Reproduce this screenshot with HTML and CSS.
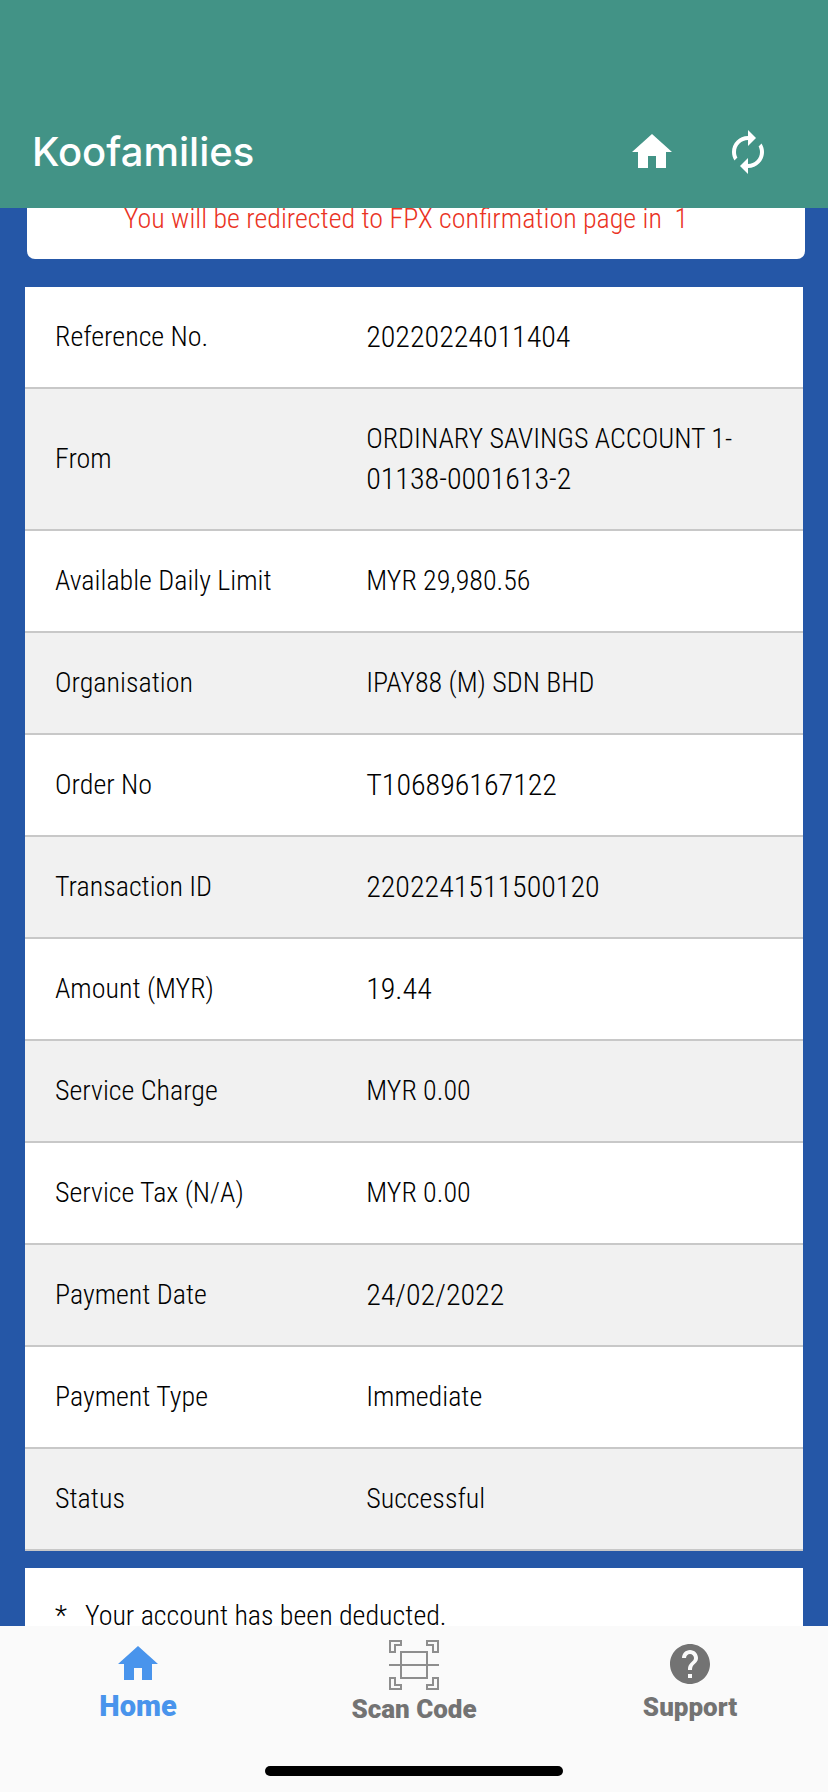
FILE: index.html
```html
<!DOCTYPE html>
<html lang="en">
<head>
<meta charset="utf-8">
<meta name="viewport" content="width=device-width, initial-scale=1">
<title>Koofamilies</title>
<link rel="stylesheet" href="styles.css">
</head>
<body>
<div class="app">
  <header class="app-bar">
    <h1 class="app-title">Koofamilies</h1>
    <div class="app-actions">
      <button class="icon-button" type="button" aria-label="Home">
        <svg class="icon" viewBox="0 0 24 24"><path d="M10 20v-6h4v6h5v-8h3L12 3 2 12h3v8z"/></svg>
      </button>
      <button class="icon-button" type="button" aria-label="Refresh">
        <svg class="icon" viewBox="0 0 24 24"><path d="M12 6v3l4-4-4-4v3c-4.42 0-8 3.58-8 8 0 1.57.46 3.03 1.24 4.26L6.7 14.8c-.45-.83-.7-1.79-.7-2.8 0-3.31 2.69-6 6-6zm6.76 1.74L17.3 9.2c.44.84.7 1.79.7 2.8 0 3.31-2.69 6-6 6v-3l-4 4 4 4v-3c4.42 0 8-3.58 8-8 0-1.57-.46-3.03-1.24-4.26z"/></svg>
      </button>
    </div>
  </header>

  <main class="page">
    <p class="redirect">You will be redirected to FPX confirmation page in &nbsp;1</p>
    <table class="details">
      <tbody>
        <tr><th scope="row">Reference No.</th><td class="number">20220224011404</td></tr>
        <tr><th scope="row">From</th><td>ORDINARY SAVINGS ACCOUNT 1-<div class="number">01138-0001613-2</div></td></tr>
        <tr><th scope="row">Available Daily Limit</th><td>MYR 29,980.56</td></tr>
        <tr><th scope="row">Organisation</th><td>IPAY88 (M) SDN BHD</td></tr>
        <tr><th scope="row">Order No</th><td class="number">T106896167122</td></tr>
        <tr><th scope="row">Transaction ID</th><td class="number">2202241511500120</td></tr>
        <tr><th scope="row">Amount (MYR)</th><td class="number">19.44</td></tr>
        <tr><th scope="row">Service Charge</th><td>MYR 0.00</td></tr>
        <tr><th scope="row">Service Tax (N/A)</th><td>MYR 0.00</td></tr>
        <tr><th scope="row">Payment Date</th><td class="number">24/02/2022</td></tr>
        <tr><th scope="row">Payment Type</th><td>Immediate</td></tr>
        <tr><th scope="row">Status</th><td>Successful</td></tr>
      </tbody>
    </table>
    <div class="notes"><span>*</span><span>Your account has been deducted.</span></div>
  </main>

  <footer class="bottom">
    <nav class="tabs">
      <button class="tab tab-active" type="button">
        <svg class="icon" viewBox="0 0 24 24"><path d="M10 20v-6h4v6h5v-8h3L12 3 2 12h3v8z"/></svg>
        <span>Home</span>
      </button>
      <button class="tab" type="button">
        <svg class="scan-icon" viewBox="0 0 50 50"><path d="M1 1h11v4H6v7H1zM49 1H38v4h6v7h5zM1 49h11v-4H6v-7H1zM49 49H38v-4h6v-7h5zM12 12h26v26H12zM0 25h50"/></svg>
        <span>Scan Code</span>
      </button>
      <button class="tab" type="button">
        <svg class="icon" viewBox="0 0 24 24"><path d="M12 2C6.48 2 2 6.48 2 12s4.480 10 10 10 10-4.480 10-10S17.520 2 12 2zm1 17h-2v-2h2v2zm2.070-7.750l-.9.920C13.450 12.900 13 13.500 13 15h-2v-.5c0-1.100.450-2.100 1.170-2.830l1.240-1.260c.370-.360.590-.860.590-1.410 0-1.100-.9-2-2-2s-2 .9-2 2H8c0-2.210 1.790-4 4-4s4 1.790 4 4c0 .880-.360 1.680-.930 2.250z"/></svg>
        <span>Support</span>
      </button>
    </nav>
    <div class="home-indicator"></div>
  </footer>
</div>
</body>
</html>
```
FILE: styles.css
```css
* { box-sizing: border-box; }

body {
  margin: 0;
  background: #2557a7;
  color: #000;
  font-family: "Roboto Condensed", "Liberation Sans Narrow", Roboto, sans-serif;
  font-size: 28px;
  font-weight: 300;
  line-height: 40px;
}

button {
  margin: 0;
  padding: 0;
  border: 0;
  background: none;
  color: inherit;
  font: inherit;
}

.app {
  display: flex;
  flex-direction: column;
  height: 100vh;
}

.app-bar {
  display: flex;
  flex: none;
  align-items: center;
  justify-content: space-between;
  padding: 128px 56px 32px 32px;
  background: #429386;
  color: #fff;
}

.app-title {
  margin: 0;
  font-family: Inter, sans-serif;
  font-size: 40px;
  font-weight: 500;
  line-height: 48px;
}

.app-actions {
  display: flex;
  gap: 48px;
}

.icon-button { display: block; }

.icon {
  display: block;
  width: 48px;
  height: 48px;
  fill: currentColor;
}

.page {
  flex: 1;
  min-height: 0;
  overflow: hidden;
  padding: 0 25px;
}

.redirect {
  margin: -9px -2px 28px 2px;
  padding: 0 20px 20px 0;
  border-radius: 0 0 8px 8px;
  background: #fff;
  color: #ea3323;
  text-align: center;
}

.details {
  width: 100%;
  margin-bottom: 17px;
  border-collapse: separate;
  border-spacing: 0;
  table-layout: fixed;
  background: #fff;
}

.details th,
.details td {
  padding: 30px;
  border-bottom: 2px solid #c8c8c8;
  font-weight: 300;
  text-align: left;
  vertical-align: middle;
}

.details td { padding-right: 0; }
.details th { width: 40%; padding-right: 0; }
.details tr:nth-child(even) { background: #f1f1f1; }
.details .number { font-size: 30px; }

.notes {
  display: flex;
  gap: 18px;
  padding: 30px;
  background: #fff;
  line-height: 36px;
}

.bottom {
  display: flex;
  flex: none;
  flex-direction: column;
  align-items: center;
  gap: 36px;
  padding: 14px 0 16px;
  background: #fafafa;
}

.tabs {
  display: flex;
  width: 100%;
}

.tab {
  display: flex;
  flex: 1;
  flex-direction: column;
  align-items: center;
  height: 90px;
  color: #737373;
  font-family: Roboto, sans-serif;
  font-size: 26px;
  font-weight: 900;
  line-height: 38px;
}

.tab-active {
  color: #4994ec;
  font-size: 29px;
  line-height: 36px;
}

.scan-icon {
  display: block;
  width: 50px;
  height: 50px;
  fill: none;
  stroke: #8e8e8e;
  stroke-width: 2;
}

.home-indicator {
  width: 36%;
  height: 10px;
  border-radius: 5px;
  background: #000;
}
```
